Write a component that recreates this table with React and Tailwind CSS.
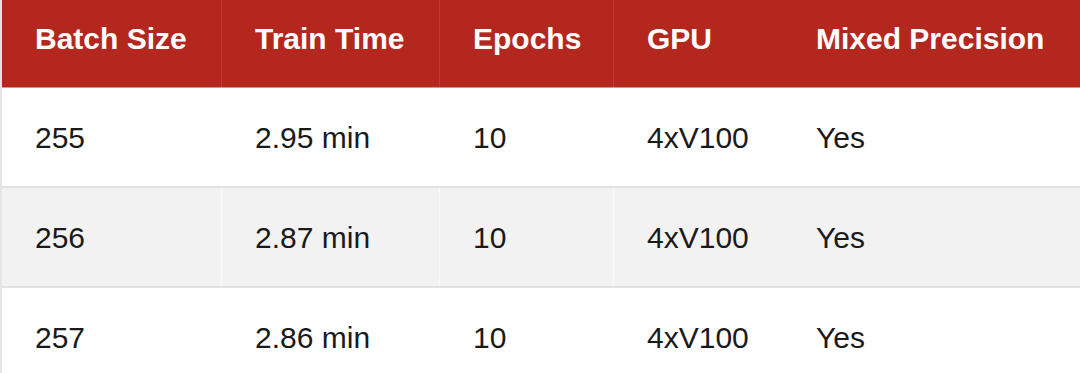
const headers = ["Batch Size", "Train Time", "Epochs", "GPU", "Mixed Precision"]

const rows = [
  ["255", "2.95 min", "10", "4xV100", "Yes"],
  ["256", "2.87 min", "10", "4xV100", "Yes"],
  ["257", "2.86 min", "10", "4xV100", "Yes"],
]

const App = () => {
  return (
    <div className="w-[1080px] h-[373px] overflow-hidden bg-white border-l-2 border-[#e4e4e4] font-['Liberation_Sans',Arial,sans-serif]">
      <div className="grid grid-cols-[220px_218px_174px_169px_1fr] h-[88px] bg-[#b3271f] border-b border-[#e88a85] text-white font-bold text-[30px]">
        {headers.map((h, i) => (
          <div key={h} className={`flex items-center pl-[33px] pb-[10px] ${i < 3 ? "border-r border-white/10" : ""}`}>
            {h}
          </div>
        ))}
      </div>
      {rows.map((row, r) => (
        <div
          key={row[0]}
          className={`grid grid-cols-[220px_218px_174px_169px_1fr] h-[100px] border-b-2 border-[#e2e2e2] text-[30px] text-[#1a1a1a] ${r % 2 === 1 ? "bg-[#f2f2f2]" : "bg-white"}`}
        >
          {row.map((cell, i) => (
            <div key={i} className={`flex items-center pl-[33px] ${i < 3 ? "border-r border-white/50" : ""}`}>
              {cell}
            </div>
          ))}
        </div>
      ))}
    </div>
  )
}

export default App
